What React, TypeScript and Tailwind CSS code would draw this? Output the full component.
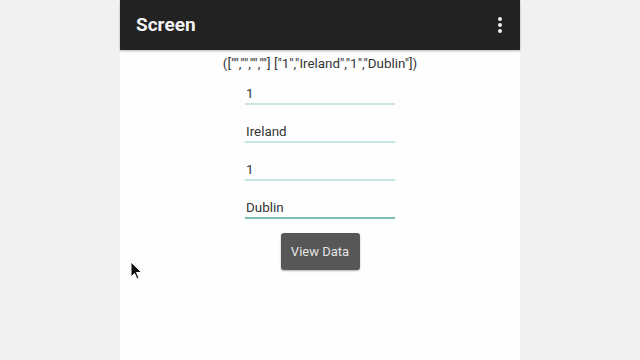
const FIELDS = ["1", "Ireland", "1", "Dublin"];

function Cursor() {
  return (
    <svg className="absolute left-[130px] top-[261px]" width="13" height="20" viewBox="0 0 13 20">
      <path d="M1 1 L1 16 L4.5 12.5 L7 18 L9 17 L6.5 11.5 L11.5 11.5 Z" fill="#111" stroke="#fff" strokeWidth="1" />
    </svg>
  );
}

export default function App() {
  return (
    <div className="relative flex h-[360px] w-[640px] justify-center bg-[#f1f1f1] font-['Roboto',sans-serif]">
      <div className="flex w-[400px] flex-col bg-[#fefefe]">
        <div className="flex h-[50px] items-center justify-between bg-[#222222] pl-4 pr-[18px] shadow-[0_1px_2px_rgba(0,0,0,0.3)]">
          <span className="mt-[1px] text-[19px] font-bold text-[#f2f2f2]">Screen</span>
          <div className="flex flex-col gap-[2px]">
            <span className="h-[4px] w-[4px] rounded-full bg-[#eeeeee]" />
            <span className="h-[4px] w-[4px] rounded-full bg-[#eeeeee]" />
            <span className="h-[4px] w-[4px] rounded-full bg-[#eeeeee]" />
          </div>
        </div>
        <div className="mt-[6px] text-center text-[13.4px] leading-[16px] text-[#333333]">
          {'(["","","",""] ["1","Ireland","1","Dublin"])'}
        </div>
        <div className="mt-[14px] flex flex-col items-center gap-[19px]">
          {FIELDS.map((f, i) => (
            <div
              key={i}
              className={`w-[150px] border-b-2 pb-[1px] pl-[1px] text-[13.4px] leading-[16px] text-[#333333] ${
                i === 3 ? "border-[#7fbfbb]" : "border-[#c6e6e4]"
              }`}
            >
              {f}
            </div>
          ))}
        </div>
        <div className="mt-[14px] flex justify-center">
          <button className="h-[37px] w-[79px] rounded-[3px] bg-[#575757] text-[13px] text-[#e4e4e4] shadow-[0_1px_2px_rgba(0,0,0,0.3)]">
            View Data
          </button>
        </div>
      </div>
      <Cursor />
    </div>
  );
}
